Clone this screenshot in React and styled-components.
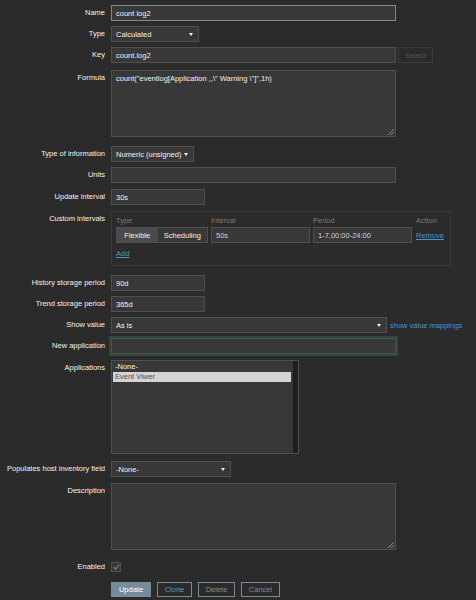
import React from "react";
import styled, { createGlobalStyle } from "styled-components";

const GlobalStyle = createGlobalStyle`
  html, body {
    margin: 0;
    padding: 0;
    background: #2b2b2b;
  }
  body {
    font-family: "Liberation Sans", Arial, sans-serif;
    font-size: 7.5px;
    color: #f2f2f2;
    overflow: hidden;
  }
`;

const Form = styled.form`
  display: flex;
  flex-direction: column;
  width: 476px;
  height: 600px;
  padding-top: 5px;
  box-sizing: border-box;
`;

const Row = styled.div`
  display: grid;
  grid-template-columns: 105px 1fr;
  column-gap: 6px;
  align-items: start;
  margin-top: ${(p) => p.$mt ?? 5}px;
`;

const Label = styled.label`
  text-align: right;
  line-height: 16px;
  white-space: nowrap;
  color: #f2f2f2;
`;

const Field = styled.div`
  display: flex;
  align-items: center;
  gap: ${(p) => p.$gap ?? 3}px;
`;

const TextInput = styled.input`
  box-sizing: border-box;
  height: 16px;
  width: ${(p) => p.$w}px;
  padding: 0 4px;
  background: #383838;
  border: 1px solid ${(p) => (p.$focus ? "#768d99" : "#4f4f4f")};
  color: ${(p) => p.$color || "#f2f2f2"};
  font: inherit;
  outline: none;
  box-shadow: ${(p) => (p.$glow ? "0 0 0 2px #2e4a39" : "none")};
`;

const Select = styled.div`
  box-sizing: border-box;
  height: 16px;
  width: ${(p) => p.$w}px;
  padding: 0 5px 0 4px;
  display: flex;
  align-items: center;
  justify-content: space-between;
  background: #383838;
  border: 1px solid #4f4f4f;
  white-space: nowrap;
`;

const Caret = styled.span`
  width: 0;
  height: 0;
  border-left: 2.5px solid transparent;
  border-right: 2.5px solid transparent;
  border-top: 3.5px solid #f2f2f2;
`;

const Link = styled.a`
  color: #4796c4;
  text-decoration: ${(p) => (p.$underline ? "underline" : "none")};
  text-underline-offset: 1px;
  cursor: pointer;
  white-space: nowrap;
`;

const GhostButton = styled.button`
  box-sizing: border-box;
  height: 16px;
  width: 35px;
  padding: 0;
  font: inherit;
  background: transparent;
  border: 1px solid #3a3a3a;
  color: #545454;
`;

const AreaWrap = styled.div`
  position: relative;
  width: 285px;
  height: ${(p) => p.$h}px;
`;

const TextArea = styled.textarea`
  box-sizing: border-box;
  width: 100%;
  height: 100%;
  margin: 0;
  padding: 3px 4px;
  resize: none;
  background: #383838;
  border: 1px solid #4f4f4f;
  color: #f2f2f2;
  font: inherit;
  line-height: 10px;
  outline: none;
`;

const Grip = styled.svg`
  position: absolute;
  right: 2px;
  bottom: 2px;
`;

const IntervalBox = styled.div`
  box-sizing: border-box;
  width: 340px;
  height: 55px;
  padding: 3px 4px 5px;
  border: 1px solid #393939;
`;

const IntervalGrid = styled.div`
  display: grid;
  grid-template-columns: 92px 99px 100px auto;
  column-gap: 3px;
  align-items: center;
`;

const HeadCell = styled.div`
  line-height: 12px;
  color: #7a7a7a;
`;

const Segmented = styled.div`
  display: flex;
  box-sizing: border-box;
  height: 16px;
  border: 1px solid #4f4f4f;
`;

const Segment = styled.span`
  width: ${(p) => p.$w}px;
  display: flex;
  align-items: center;
  justify-content: center;
  background: ${(p) => (p.$active ? "#4b4b4b" : "#383838")};
  color: #f2f2f2;
`;

const AddLine = styled.div`
  margin-top: 4px;
  line-height: 13px;
`;

const ListBox = styled.div`
  display: flex;
  box-sizing: border-box;
  width: 188px;
  height: 94px;
  background: #383838;
  border: 1px solid #4f4f4f;
`;

const ListItems = styled.div`
  flex: 1;
  padding: 1px 2px 0 1px;
`;

const ListItem = styled.div`
  line-height: 10px;
  padding: 0 2px;
  background: ${(p) => (p.$selected ? "#d4d4d4" : "transparent")};
  color: ${(p) => (p.$selected ? "#505050" : "#f2f2f2")};
`;

const ScrollTrack = styled.div`
  width: 5px;
  background: #1e1e1e;
`;

const CheckBox = styled.span`
  box-sizing: border-box;
  width: 10px;
  height: 10px;
  margin-top: 3px;
  display: flex;
  align-items: center;
  justify-content: center;
  background: #383838;
  border: 1px solid #4f4f4f;
`;

const ButtonBar = styled.div`
  display: flex;
  gap: 6px;
`;

const Button = styled.button`
  box-sizing: border-box;
  height: 15px;
  width: ${(p) => p.$w}px;
  padding: 0;
  font: inherit;
  border: 1px solid #768d99;
  background: ${(p) => (p.$primary ? "#768d99" : "transparent")};
  color: ${(p) => (p.$primary ? "#ffffff" : "#768d99")};
`;

const ResizeGrip = () => (
  <Grip width="6" height="6" viewBox="0 0 6 6">
    <path d="M6 0 L0 6 M6 3 L3 6" stroke="#9a9a9a" strokeWidth="0.8" />
  </Grip>
);

const Dropdown = ({ w, children }) => (
  <Select $w={w}>
    <span>{children}</span>
    <Caret />
  </Select>
);

const formula = 'count("eventlog[Application ,,\\" Warning \\"]",1h)';

const App = () => {
  return (
    <>
      <GlobalStyle />
      <Form onSubmit={(e) => e.preventDefault()}>
        <Row $mt={0}>
          <Label>Name</Label>
          <Field>
            <TextInput $w={285} $focus readOnly value="count log2" />
          </Field>
        </Row>
        <Row>
          <Label>Type</Label>
          <Field>
            <Dropdown w={88}>Calculated</Dropdown>
          </Field>
        </Row>
        <Row>
          <Label>Key</Label>
          <Field $gap={2}>
            <TextInput $w={285} readOnly value="count.log2" />
            <GhostButton type="button">Select</GhostButton>
          </Field>
        </Row>
        <Row $mt={7}>
          <Label>Formula</Label>
          <AreaWrap $h={67}>
            <TextArea readOnly value={formula} />
            <ResizeGrip />
          </AreaWrap>
        </Row>
        <Row $mt={9}>
          <Label>Type of information</Label>
          <Field>
            <Dropdown w={83}>Numeric (unsigned)</Dropdown>
          </Field>
        </Row>
        <Row>
          <Label>Units</Label>
          <Field>
            <TextInput $w={285} readOnly value="" />
          </Field>
        </Row>
        <Row $mt={6}>
          <Label>Update interval</Label>
          <Field>
            <TextInput $w={94} readOnly value="30s" />
          </Field>
        </Row>
        <Row $mt={6}>
          <Label>Custom intervals</Label>
          <IntervalBox>
            <IntervalGrid>
              <HeadCell>Type</HeadCell>
              <HeadCell>Interval</HeadCell>
              <HeadCell>Period</HeadCell>
              <HeadCell>Action</HeadCell>
              <Segmented>
                <Segment $w={41} $active>
                  Flexible
                </Segment>
                <Segment $w={50}>Scheduling</Segment>
              </Segmented>
              <TextInput $w={99} $color="#d2d2d2" readOnly value="50s" />
              <TextInput $w={99} $color="#d2d2d2" readOnly value="1-7,00:00-24:00" />
              <Link $underline>Remove</Link>
            </IntervalGrid>
            <AddLine>
              <Link $underline>Add</Link>
            </AddLine>
          </IntervalBox>
        </Row>
        <Row $mt={9}>
          <Label>History storage period</Label>
          <Field>
            <TextInput $w={94} readOnly value="90d" />
          </Field>
        </Row>
        <Row>
          <Label>Trend storage period</Label>
          <Field>
            <TextInput $w={94} readOnly value="365d" />
          </Field>
        </Row>
        <Row>
          <Label>Show value</Label>
          <Field>
            <Dropdown w={276}>As is</Dropdown>
            <Link>show value mappings</Link>
          </Field>
        </Row>
        <Row $mt={5}>
          <Label>New application</Label>
          <Field>
            <TextInput $w={285} $glow readOnly value="" />
          </Field>
        </Row>
        <Row $mt={6}>
          <Label>Applications</Label>
          <ListBox>
            <ListItems>
              <ListItem>-None-</ListItem>
              <ListItem $selected>Event Viwer</ListItem>
            </ListItems>
            <ScrollTrack />
          </ListBox>
        </Row>
        <Row $mt={7}>
          <Label>Populates host inventory field</Label>
          <Field>
            <Dropdown w={120}>-None-</Dropdown>
          </Field>
        </Row>
        <Row $mt={6}>
          <Label>Description</Label>
          <AreaWrap $h={67}>
            <TextArea readOnly value="" />
            <ResizeGrip />
          </AreaWrap>
        </Row>
        <Row $mt={9}>
          <Label>Enabled</Label>
          <Field>
            <CheckBox>
              <svg width="7" height="6" viewBox="0 0 7 6">
                <path d="M0.8 3.2 L2.7 5 L6.2 1" fill="none" stroke="#768d99" strokeWidth="1.1" />
              </svg>
            </CheckBox>
          </Field>
        </Row>
        <Row $mt={7}>
          <span />
          <ButtonBar>
            <Button type="button" $primary $w={40}>
              Update
            </Button>
            <Button type="button" $w={35}>
              Clone
            </Button>
            <Button type="button" $w={37}>
              Delete
            </Button>
            <Button type="button" $w={39}>
              Cancel
            </Button>
          </ButtonBar>
        </Row>
      </Form>
    </>
  );
};

export default App;
